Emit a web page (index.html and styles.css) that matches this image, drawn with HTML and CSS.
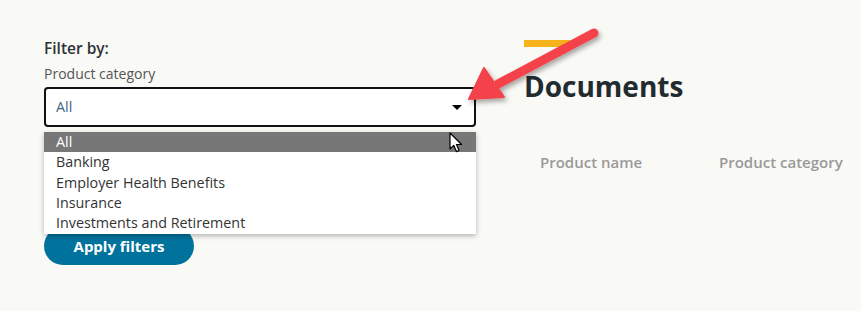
FILE: index.html
```html
<!DOCTYPE html>
<html lang="en">
<head>
  <meta charset="UTF-8">
  <title>Documents</title>
  <link rel="stylesheet" href="styles.css">
</head>
<body>
  <div class="page">
    <form class="filters">
      <div class="filter-title">Filter by:</div>
      <label class="field-label" for="category">Product category</label>
      <div class="select-wrap">
        <div class="select" id="category">
          <span>All</span>
          <span class="caret"></span>
        </div>
        <ul class="options">
          <li class="active">All</li>
          <li>Banking</li>
          <li>Employer Health Benefits</li>
          <li>Insurance</li>
          <li>Investments and Retirement</li>
        </ul>
      </div>
      <button type="button" class="apply">Apply filters</button>
    </form>

    <section class="documents">
      <div class="accent"></div>
      <h1>Documents</h1>
      <div class="table-head">
        <span class="col-name">Product name</span>
        <span class="col-cat">Product category</span>
      </div>
    </section>
  </div>

  <svg class="cursor" width="14" height="22" viewBox="0 0 14 22">
    <path d="M1 1 L1 17 L4.8 13.4 L7.4 19.6 L10 18.5 L7.5 12.5 L12.6 12.5 Z" fill="#fff" stroke="#000" stroke-width="1.2" stroke-linejoin="round"/>
  </svg>

  <svg class="annotation" width="861" height="311" viewBox="0 0 861 311">
    <defs>
      <filter id="shadow" x="-20%" y="-20%" width="140%" height="140%">
        <feDropShadow dx="2" dy="3" stdDeviation="2.5" flood-color="#000" flood-opacity="0.35"/>
      </filter>
    </defs>
    <g filter="url(#shadow)" fill="#f4434c" stroke="#f4434c">
      <line x1="594" y1="33" x2="498" y2="84" stroke-width="9" stroke-linecap="round"/>
      <polygon points="469,99 484,68 504,97" stroke-width="2" stroke-linejoin="round"/>
    </g>
  </svg>
</body>
</html>
```

FILE: styles.css
```css
body {
  margin: 0;
  background: #f9f9f6;
  font-family: "Open Sans", "Noto Sans", sans-serif;
  color: #333;
}
.page {
  display: flex;
  padding: 38px 0 0 44px;
}
.filters {
  width: 432px;
  margin-right: 48px;
}
.filter-title {
  font-size: 15.5px;
  font-weight: 600;
  line-height: 20px;
  color: #2e3336;
}
.field-label {
  display: block;
  margin-top: 6px;
  font-size: 14px;
  line-height: 20px;
  color: #555;
}
.select-wrap {
  position: relative;
  margin-top: 3px;
}
.select {
  box-sizing: border-box;
  height: 40px;
  border: 2px solid #111;
  border-radius: 4px;
  background: #fff;
  display: flex;
  align-items: center;
  justify-content: space-between;
  padding: 0 12px 1px 10px;
  font-size: 14.3px;
  color: #3e6680;
}
.caret {
  width: 0;
  height: 0;
  border-left: 5px solid transparent;
  border-right: 5px solid transparent;
  border-top: 5px solid #000;
  margin-top: 2px;
}
.options {
  position: absolute;
  top: 45px;
  left: 0;
  right: 0;
  margin: 0;
  padding: 0 0 1px;
  list-style: none;
  background: #fff;
  box-shadow: 0 2px 5px rgba(0, 0, 0, 0.28);
  z-index: 2;
}
.options li {
  height: 20.3px;
  line-height: 20px;
  padding-left: 12px;
  font-size: 14.3px;
  color: #333;
}
.options li.active {
  background: #777;
  color: #fff;
}
.apply {
  margin-top: 100px;
  width: 150px;
  height: 38px;
  border: none;
  border-radius: 19px;
  background: #00739c;
  color: #fff;
  font-family: inherit;
  font-size: 15px;
  font-weight: 700;
}
.documents {
  flex: 1;
  padding-top: 2px;
}
.accent {
  width: 46px;
  height: 7px;
  background: #f6b31b;
}
h1 {
  margin: 20px 0 0;
  font-size: 28px;
  font-weight: 700;
  line-height: 38px;
  color: #222b30;
}
.table-head {
  display: flex;
  margin-top: 47px;
  padding-left: 16px;
  font-size: 15px;
  font-weight: 600;
  color: #999;
}
.col-name {
  width: 179px;
}
.cursor {
  position: absolute;
  left: 449px;
  top: 132px;
  z-index: 3;
}
.annotation {
  position: absolute;
  left: 0;
  top: 0;
  z-index: 4;
  pointer-events: none;
}
```
